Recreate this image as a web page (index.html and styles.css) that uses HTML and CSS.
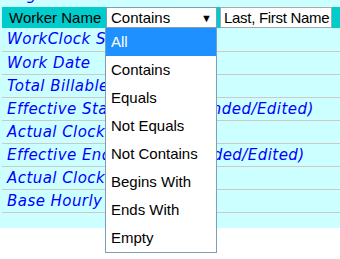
FILE: index.html
```html
<!DOCTYPE html>
<html lang="en">
<head>
    <meta charset="UTF-8">
    <meta name="viewport" content="width=device-width, initial-scale=1.0">
    <title>Worker Filter</title>
    <link rel="stylesheet" href="styles.css">
</head>
<body>
    <div class="page">
        <div class="grid">
            <div class="cut-row"><span>Regular Hours</span></div>
            <div class="filter-bar">
                <span class="filter-label">Worker Name</span>
                <div class="fake-select">
                    <span>Contains</span>
                    <span class="arrow">&#9660;</span>
                </div>
                <div class="fake-input">Last, First Name</div>
            </div>
            <div class="row first">WorkClock Start</div>
            <div class="row">Work Date</div>
            <div class="row">Total Billable Hours</div>
            <div class="row">Effective Start Time (Extended/Edited)</div>
            <div class="row">Actual Clock In</div>
            <div class="row">Effective End Time (Extended/Edited)</div>
            <div class="row">Actual Clock Out</div>
            <div class="row">Base Hourly Rate</div>
            <div class="row-end"></div>
        </div>

        <!-- open list of the select -->
        <ul class="dropdown">
            <li class="selected">All</li>
            <li>Contains</li>
            <li>Equals</li>
            <li>Not Equals</li>
            <li>Not Contains</li>
            <li>Begins With</li>
            <li>Ends With</li>
            <li>Empty</li>
        </ul>
    </div>
</body>
</html>
```

FILE: styles.css
```css
body {
    margin: 0;
    background-color: #fff;
    font-family: "Liberation Sans", Arial, sans-serif;
}

.page {
    position: relative;
    width: 340px;
    height: 259px;
    overflow: hidden;
}

.grid {
    background-color: #ccffff;
    padding-left: 2px;
    overflow: hidden;
}

.cut-row {
    height: 7px;
    overflow: hidden;
}

.cut-row span {
    display: block;
    margin-top: -14px;
    padding-left: 5px;
    font-family: "DejaVu Sans", sans-serif;
    font-style: italic;
    font-size: 15px;
    line-height: 18px;
    color: #0000ff;
}

.filter-bar {
    display: flex;
    align-items: flex-start;
    height: 21px;
    background-color: #00cccc;
    font-size: 15px;
}

.filter-label {
    width: 104px;
    padding-left: 7px;
    box-sizing: border-box;
    line-height: 21px;
    white-space: nowrap;
    color: #000;
}

.fake-select {
    display: flex;
    justify-content: space-between;
    align-items: center;
    width: 111px;
    height: 21px;
    box-sizing: border-box;
    border: 1px solid #7f9db9;
    background-color: #fff;
    padding: 0 4px;
    white-space: nowrap;
}

.arrow {
    font-size: 11px;
}

.fake-input {
    width: 112px;
    height: 21px;
    margin-left: 3px;
    box-sizing: border-box;
    border: 1px solid #a9a9a9;
    background-color: #fff;
    padding-left: 3px;
    line-height: 19px;
    letter-spacing: -0.3px;
    white-space: nowrap;
    overflow: hidden;
}

.row {
    height: 23px;
    box-sizing: border-box;
    border-bottom: 1px solid #d0c8c8;
    padding-left: 5px;
    font-family: "DejaVu Sans", sans-serif;
    font-style: italic;
    font-size: 15px;
    letter-spacing: 0.45px;
    line-height: 22px;
    color: #0000ff;
    white-space: nowrap;
    overflow: hidden;
}

.row.first {
    height: 24px;
    line-height: 23px;
}

.row-end {
    height: 15px;
}

.dropdown {
    position: absolute;
    left: 105px;
    top: 27px;
    width: 112px;
    margin: 0;
    padding: 0;
    list-style: none;
    box-sizing: border-box;
    border: 1px solid #7f9db9;
    background-color: #fff;
    font-size: 15px;
}

.dropdown li {
    height: 28px;
    line-height: 28px;
    padding-left: 5px;
    color: #000;
}

.dropdown li.selected {
    background-color: #1e90ff;
    color: #fff;
}
```
